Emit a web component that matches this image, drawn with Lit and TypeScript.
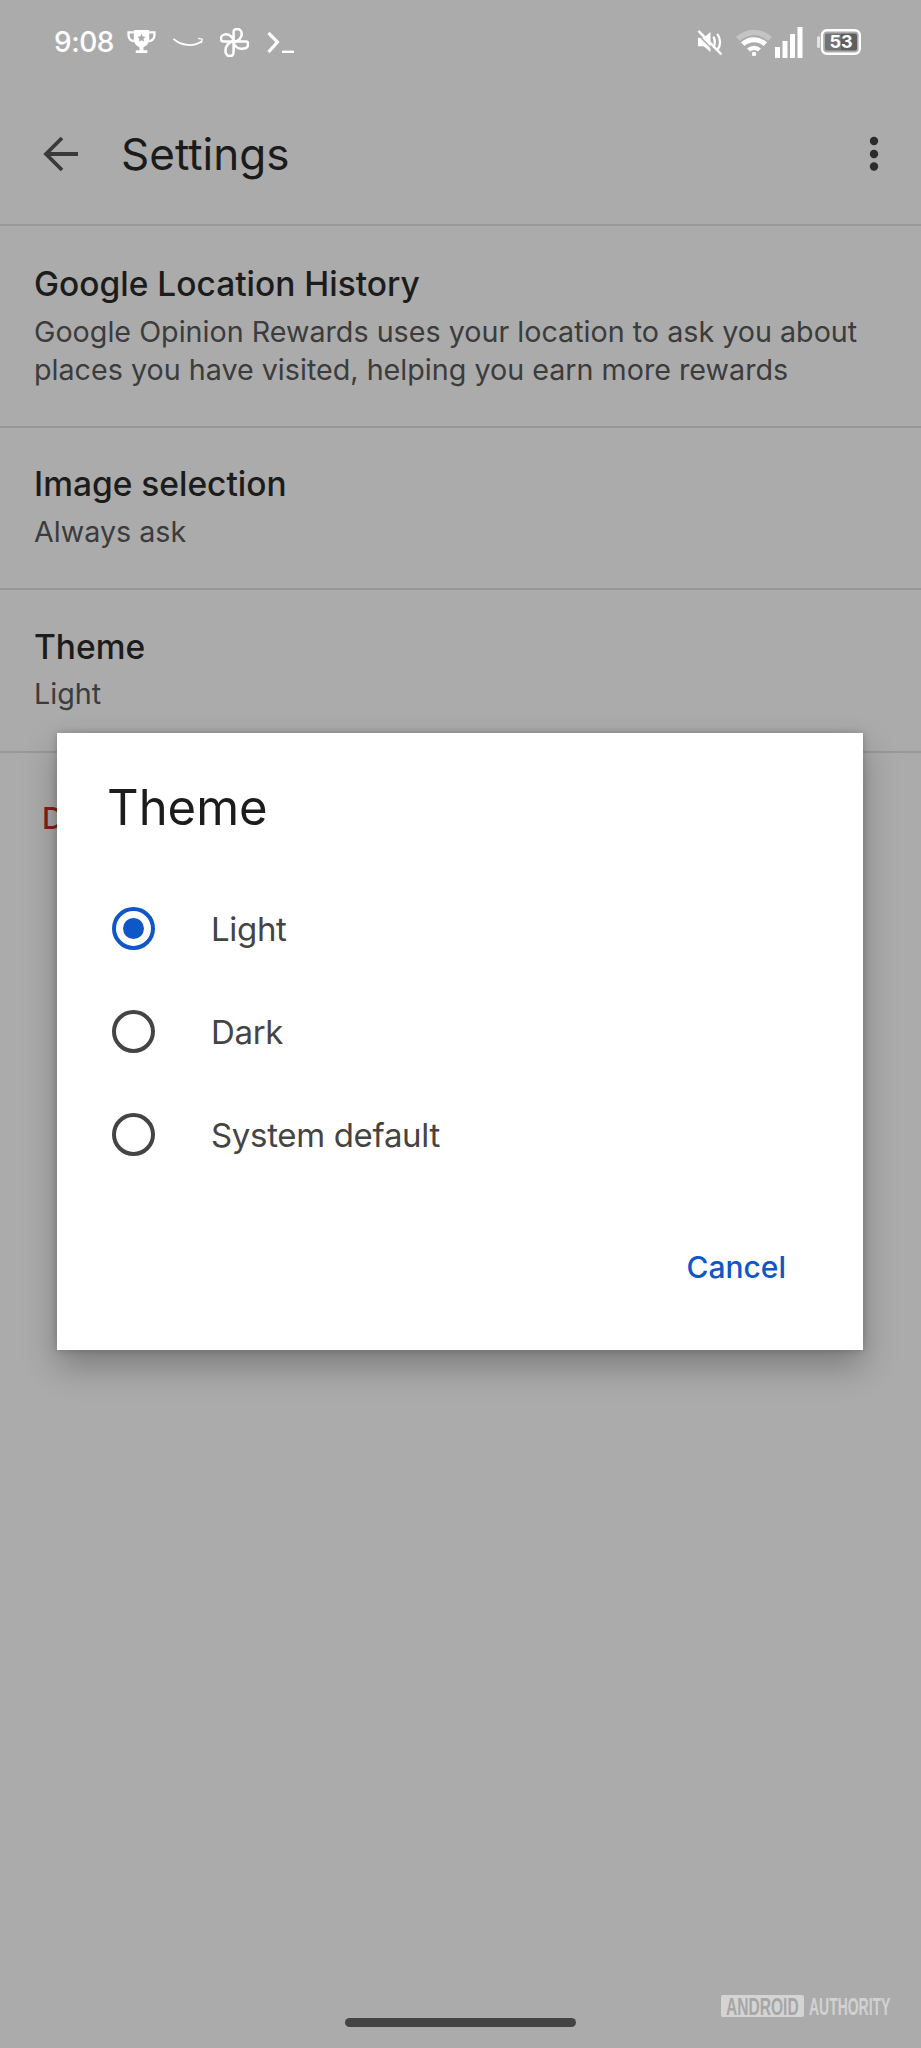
import { LitElement, html, svg, css } from "lit";
import { customElement } from "lit/decorators.js";

@customElement("app-root")
export class AppRoot extends LitElement {
  static styles = css`
    :host { display: block; width: 921px; height: 2048px; position: relative; overflow: hidden; background: #ababab; font-family: Inter, Roboto, "Liberation Sans", sans-serif; color: #1b1b1b; }
    .status { height: 84px; display: flex; align-items: center; justify-content: space-between; padding: 0 60px 0 54px; color: #fff; box-sizing: border-box; }
    .status-left, .status-right { display: flex; align-items: center; }
    .time { font-size: 28px; font-weight: 500; color: #fff; margin-right: 13px; letter-spacing: -0.5px; }
    .trophy { margin-right: 17px; }
    .amazon { margin-right: 17px; }
    .pin { margin-right: 18px; }
    .mute { margin-right: 13px; }
    .wifi { margin-right: 2px; }
    .signal { margin-right: 14px; }
    .appbar { height: 142px; box-sizing: border-box; display: flex; align-items: center; padding: 0 42px 0 40px; border-bottom: 2px solid #989898; }
    .appbar h1 { font-size: 44px; font-weight: 400; margin: 0 0 0 39px; flex: 1; }
    .row { padding: 35px 24px 0 34px; border-bottom: 2px solid #989898; box-sizing: border-box; }
    .r1 { height: 202px; padding-top: 37px; }
    .r2 { height: 162px; }
    .r3 { height: 163px; padding-top: 36px; }
    .r3 .t { margin-bottom: 7px; }
    .t { font-size: 33.5px; font-weight: 500; line-height: 42px; color: #1c1c1c; margin-bottom: 8px; }
    .s { font-size: 28.7px; line-height: 38px; color: #3c3c3c; }
    .danger { font-size: 30px; line-height: 36px; font-weight: 500; color: #8a1c1c; padding: 47px 42px 0; }
    .dialog { position: absolute; left: 57px; top: 733px; width: 806px; height: 617px; background: #fff; box-shadow: 0 16px 32px rgba(0,0,0,.28), 0 0 8px rgba(0,0,0,.2); box-sizing: border-box; padding: 44px 26px 0 50px; display: flex; flex-direction: column; }
    .dialog h2 { font-size: 49px; line-height: 62px; font-weight: 400; margin: 0 0 38px; color: #1c1c1c; }
    .opt { height: 103px; display: flex; align-items: center; gap: 56px; font-size: 33px; letter-spacing: -0.33px; color: #444; padding-left: 5px; }
    .radio { width: 43px; height: 43px; flex: none; }
    .actions { margin-top: 60px; display: flex; justify-content: flex-end; font-size: 30px; font-weight: 500; padding-right: 51px; color: #0f56c8; line-height: 42px; }
    .home { position: absolute; left: 345px; top: 2018px; width: 231px; height: 9px; border-radius: 5px; background: #444; }
    .wm { position: absolute; left: 721px; top: 1995px; overflow: visible; }
    svg { display: block; flex: none; }
  `;

  radio(on: boolean) {
    const c = on ? "#0f56c8" : "#444";
    return html`<svg class="radio" viewBox="0 0 43 43"><circle cx="21.5" cy="21.5" r="19.5" fill="none" stroke=${c} stroke-width="4"></circle>${on ? svg`<circle cx="21.5" cy="21.5" r="10.5" fill=${c}></circle>` : ""}</svg>`;
  }

  render() {
    return html`
      <div class="status">
        <div class="status-left">
          <span class="time">9:08</span>
          <svg class="trophy" width="29" height="24" viewBox="0 0 30 25" fill="#fff"><path d="M7 0h16v10c0 4-3 7-6 8v3h4v3H9v-3h4v-3c-3-1-6-4-6-8z"/><path d="M7 2.500H1.500v3c0 4 3 6 5.500 6M23 2.500h5.500v3c0 4-3 6-5.500 6" fill="none" stroke="#fff" stroke-width="2.400"/><path d="M15 4l1.300 2.800 3 .3-2.200 2 .6 3-2.700-1.500-2.700 1.500.6-3-2.200-2 3-.3z" fill="#ababab"/></svg>
          <svg class="amazon" width="30" height="10" viewBox="0 0 30 10" fill="none" stroke="#fff" stroke-width="1.700"><path d="M0.500 2c8 7 20 8 28 2.500"/><path d="M25 1.300l4.300 .9-1 4" stroke-width="1.300"/></svg>
          <svg class="pin" width="29" height="29" viewBox="0 0 32 32" fill="none" stroke="#fff" stroke-width="2.800" stroke-linejoin="round"><path d="M15 15V4c0-2 2-3 4-3 3 0 5 3 5 6 0 4-4 8-9 8z"/><path d="M15 15h14c1 0 2 1 2 3 0 4-4 5-7 5-5 0-9-4-9-8z"/><path d="M15 15v11c0 3-1 5-4 5-4 0-5-4-5-6 0-5 4-10 9-10z"/><path d="M15 15H4c-2 0-3-1-3-3 0-3 3-5 6-5 4 0 8 4 8 8z"/></svg>
          <svg width="27" height="21" viewBox="0 0 27 21" fill="none" stroke="#fff" stroke-width="3.200"><path d="M1.500 1 L10.500 10 L1.500 20"/><path d="M15 19.800h12" stroke-width="2.400"/></svg>
        </div>
        <div class="status-right">
          <svg class="mute" width="25" height="25" viewBox="0 0 26 26" fill="none" stroke="#fff" stroke-width="2.400"><path d="M1 8h6l7-6v21l-7-6H1z" fill="#fff" stroke="none"/><path d="M17 7c2 3 2 8 0 11M21 4c4 5 4 12 0 17"/><path d="M0 4l22 22" stroke="#ababab" stroke-width="1.500"/><path d="M1.500 1l24 24.500" stroke-width="2.600"/></svg>
          <svg class="wifi" width="38" height="28" viewBox="0 0 38 28"><path d="M1 9a26 26 0 0 1 36 0l-4 4a20 20 0 0 0-28 0z" fill="#c4c4c4"/><path d="M6 14.500a19 19 0 0 1 26 0l-3.500 3.500a14 14 0 0 0-19 0z" fill="#fff"/><path d="M12 20.500a10 10 0 0 1 14 0l-3 3a6 6 0 0 0-8 0z" fill="#fff"/><circle cx="19" cy="26" r="2.200" fill="#fff"/></svg>
          <svg class="signal" width="28" height="31" viewBox="0 0 28 31" fill="#fff"><rect x="0" y="20" width="5" height="11"/><rect x="7.500" y="14" width="5" height="17"/><rect x="15" y="7" width="5" height="24"/><rect x="22.500" y="0" width="5" height="31"/></svg>
          <svg width="44" height="26" viewBox="0 0 44 26"><rect x="0" y="7" width="3" height="12" rx="1.500" fill="#e4e4e4"/><rect x="5" y="1.200" width="37.800" height="23.600" rx="5" fill="none" stroke="#fff" stroke-width="2.400"/><path d="M10 4.500h14v17H10a2 2 0 0 1-2-2v-13a2 2 0 0 1 2-2z" fill="#747474"/><path d="M24 4.500h14a2 2 0 0 1 2 2v13a2 2 0 0 1-2 2H24z" fill="#5e5e5e"/><text x="24" y="19.300" text-anchor="middle" font-family="Inter, Roboto, sans-serif" font-size="18" font-weight="700" fill="#fff">53</text></svg>
        </div>
      </div>
      <div class="appbar">
        <svg width="42" height="42" viewBox="0 0 42 42" fill="none" stroke="#3a3a3a" stroke-width="3.800"><path d="M38 21H7M22 5 6 21 22 37"/></svg>
        <h1>Settings</h1>
        <svg width="10" height="40" viewBox="0 0 10 40" fill="#2c2c2c"><circle cx="5" cy="7" r="4.200"/><circle cx="5" cy="20" r="4.200"/><circle cx="5" cy="32.500" r="4.200"/></svg>
      </div>
      <div class="row r1"><div class="t">Google Location History</div><div class="s">Google Opinion Rewards uses your location to ask you about places you have visited, helping you earn more rewards</div></div>
      <div class="row r2"><div class="t">Image selection</div><div class="s">Always ask</div></div>
      <div class="row r3"><div class="t">Theme</div><div class="s">Light</div></div>
      <div class="danger">D</div>
      <div class="dialog">
        <h2>Theme</h2>
        <div class="opt">${this.radio(true)}<span>Light</span></div>
        <div class="opt">${this.radio(false)}<span>Dark</span></div>
        <div class="opt">${this.radio(false)}<span>System default</span></div>
        <div class="actions">Cancel</div>
      </div>
      <div class="home"></div>
      <svg class="wm" width="172" height="24" viewBox="0 0 172 24" font-family="'Liberation Sans', sans-serif" font-size="23" font-weight="700"><rect x="0" y="0" width="83" height="22" rx="2" fill="#d4d4d4"></rect><text transform="translate(5 19.500) scale(.678 1)" fill="#a6a6a6">ANDROID</text><text transform="translate(88 19.500) scale(.607 1)" fill="#d2d2d2">AUTHORITY</text></svg>
    `;
  }
}
